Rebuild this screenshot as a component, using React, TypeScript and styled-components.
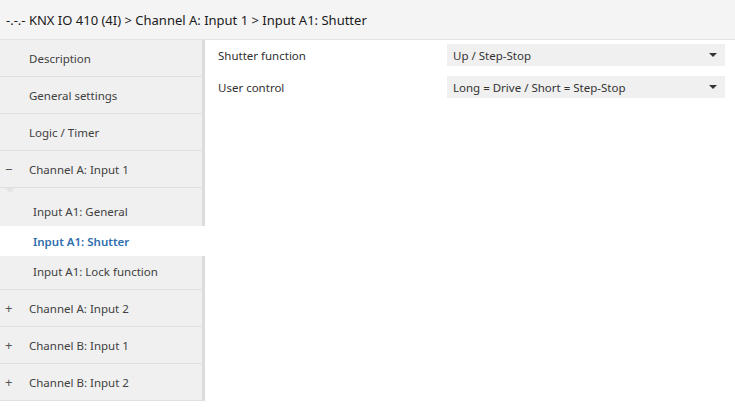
import * as React from 'react';
import styled, { createGlobalStyle, css } from 'styled-components';

const GlobalStyle = createGlobalStyle`
  html, body {
    margin: 0;
    padding: 0;
    background: #ffffff;
    font-family: "Noto Sans", "Open Sans", sans-serif;
    color: #333333;
  }
`;

const Page = styled.div`
  width: 735px;
  height: 407px;
  display: flex;
  flex-direction: column;
  overflow: hidden;
`;

const Header = styled.div`
  height: 40px;
  flex: none;
  box-sizing: border-box;
  display: flex;
  align-items: center;
  padding-left: 6px;
  background: #f4f4f4;
  border-bottom: 1px solid #e2e2e2;
  font-size: 13px;
  color: #1a1a1a;
`;

const Body = styled.div`
  flex: 1;
  display: flex;
  align-items: flex-start;
`;

const Sidebar = styled.div`
  width: 205px;
  flex: none;
  display: flex;
  flex-direction: column;
`;

const NavItem = styled.div<{ $sub?: boolean; $active?: boolean }>`
  height: 37px;
  display: flex;
  align-items: center;
  box-sizing: border-box;
  background: #f0f0f0;
  border-bottom: 1px solid #e0e0e0;
  border-right: 3px solid #dcdcdc;
  font-size: 11.5px;
  color: #404040;
  ${p => p.$sub && css`
    height: 30px;
    border-bottom: none;
    border-right: none;
    padding-left: 33px;
  `}
  ${p => p.$active && css`
    background: #ffffff;
    margin-right: -3px;
    color: #2f6eae;
    font-weight: 600;
  `}
`;

const Toggle = styled.span`
  width: 29px;
  flex: none;
  box-sizing: border-box;
  padding-left: 5px;
  font-size: 13px;
  color: #555;
`;

const SubGroup = styled.div`
  position: relative;
  padding-top: 8px;
  padding-bottom: 3px;
  background: #f0f0f0;
  border-right: 3px solid #dcdcdc;
  border-bottom: 1px solid #e0e0e0;
  display: flex;
  flex-direction: column;
`;

const Notch = styled.div`
  position: absolute;
  top: 0;
  left: 5px;
  width: 0;
  height: 0;
  border-left: 5px solid transparent;
  border-right: 5px solid transparent;
  border-top: 5px solid #e4e4e4;
`;

const Content = styled.div`
  flex: 1;
  padding: 4px 10px 0 13px;
  display: flex;
  flex-direction: column;
  gap: 10px;
`;

const ParamRow = styled.div`
  display: flex;
  align-items: center;
  height: 22px;
`;

const Label = styled.div`
  width: 229px;
  flex: none;
  font-size: 11.5px;
  color: #303030;
`;

const Select = styled.div`
  flex: 1;
  height: 22px;
  display: flex;
  align-items: center;
  justify-content: space-between;
  padding: 0 8px 0 6px;
  background: #f0f0f0;
  font-size: 11.5px;
  color: #333;
`;

const Caret = styled.span`
  width: 0;
  height: 0;
  border-left: 4px solid transparent;
  border-right: 4px solid transparent;
  border-top: 4px solid #333;
`;

const topItems = ['Description', 'General settings', 'Logic / Timer'];
const subItems = ['Input A1: General', 'Input A1: Shutter', 'Input A1: Lock function'];
const channels = ['Channel A: Input 2', 'Channel B: Input 1', 'Channel B: Input 2'];

const params = [
  { label: 'Shutter function', value: 'Up / Step-Stop' },
  { label: 'User control', value: 'Long = Drive / Short = Step-Stop' },
];

export default function App() {
  return (
    <Page>
      <GlobalStyle />
      <Header>-.-.- KNX IO 410 (4I) &gt; Channel A: Input 1 &gt; Input A1: Shutter</Header>
      <Body>
        <Sidebar>
          {topItems.map(t => (
            <NavItem key={t}>
              <Toggle />
              {t}
            </NavItem>
          ))}
          <NavItem>
            <Toggle>−</Toggle>
            Channel A: Input 1
          </NavItem>
          <SubGroup>
            <Notch />
            {subItems.map(t => (
              <NavItem key={t} $sub $active={t === 'Input A1: Shutter'}>
                {t}
              </NavItem>
            ))}
          </SubGroup>
          {channels.map(t => (
            <NavItem key={t}>
              <Toggle>+</Toggle>
              {t}
            </NavItem>
          ))}
        </Sidebar>
        <Content>
          {params.map(p => (
            <ParamRow key={p.label}>
              <Label>{p.label}</Label>
              <Select>
                {p.value}
                <Caret />
              </Select>
            </ParamRow>
          ))}
        </Content>
      </Body>
    </Page>
  );
}
